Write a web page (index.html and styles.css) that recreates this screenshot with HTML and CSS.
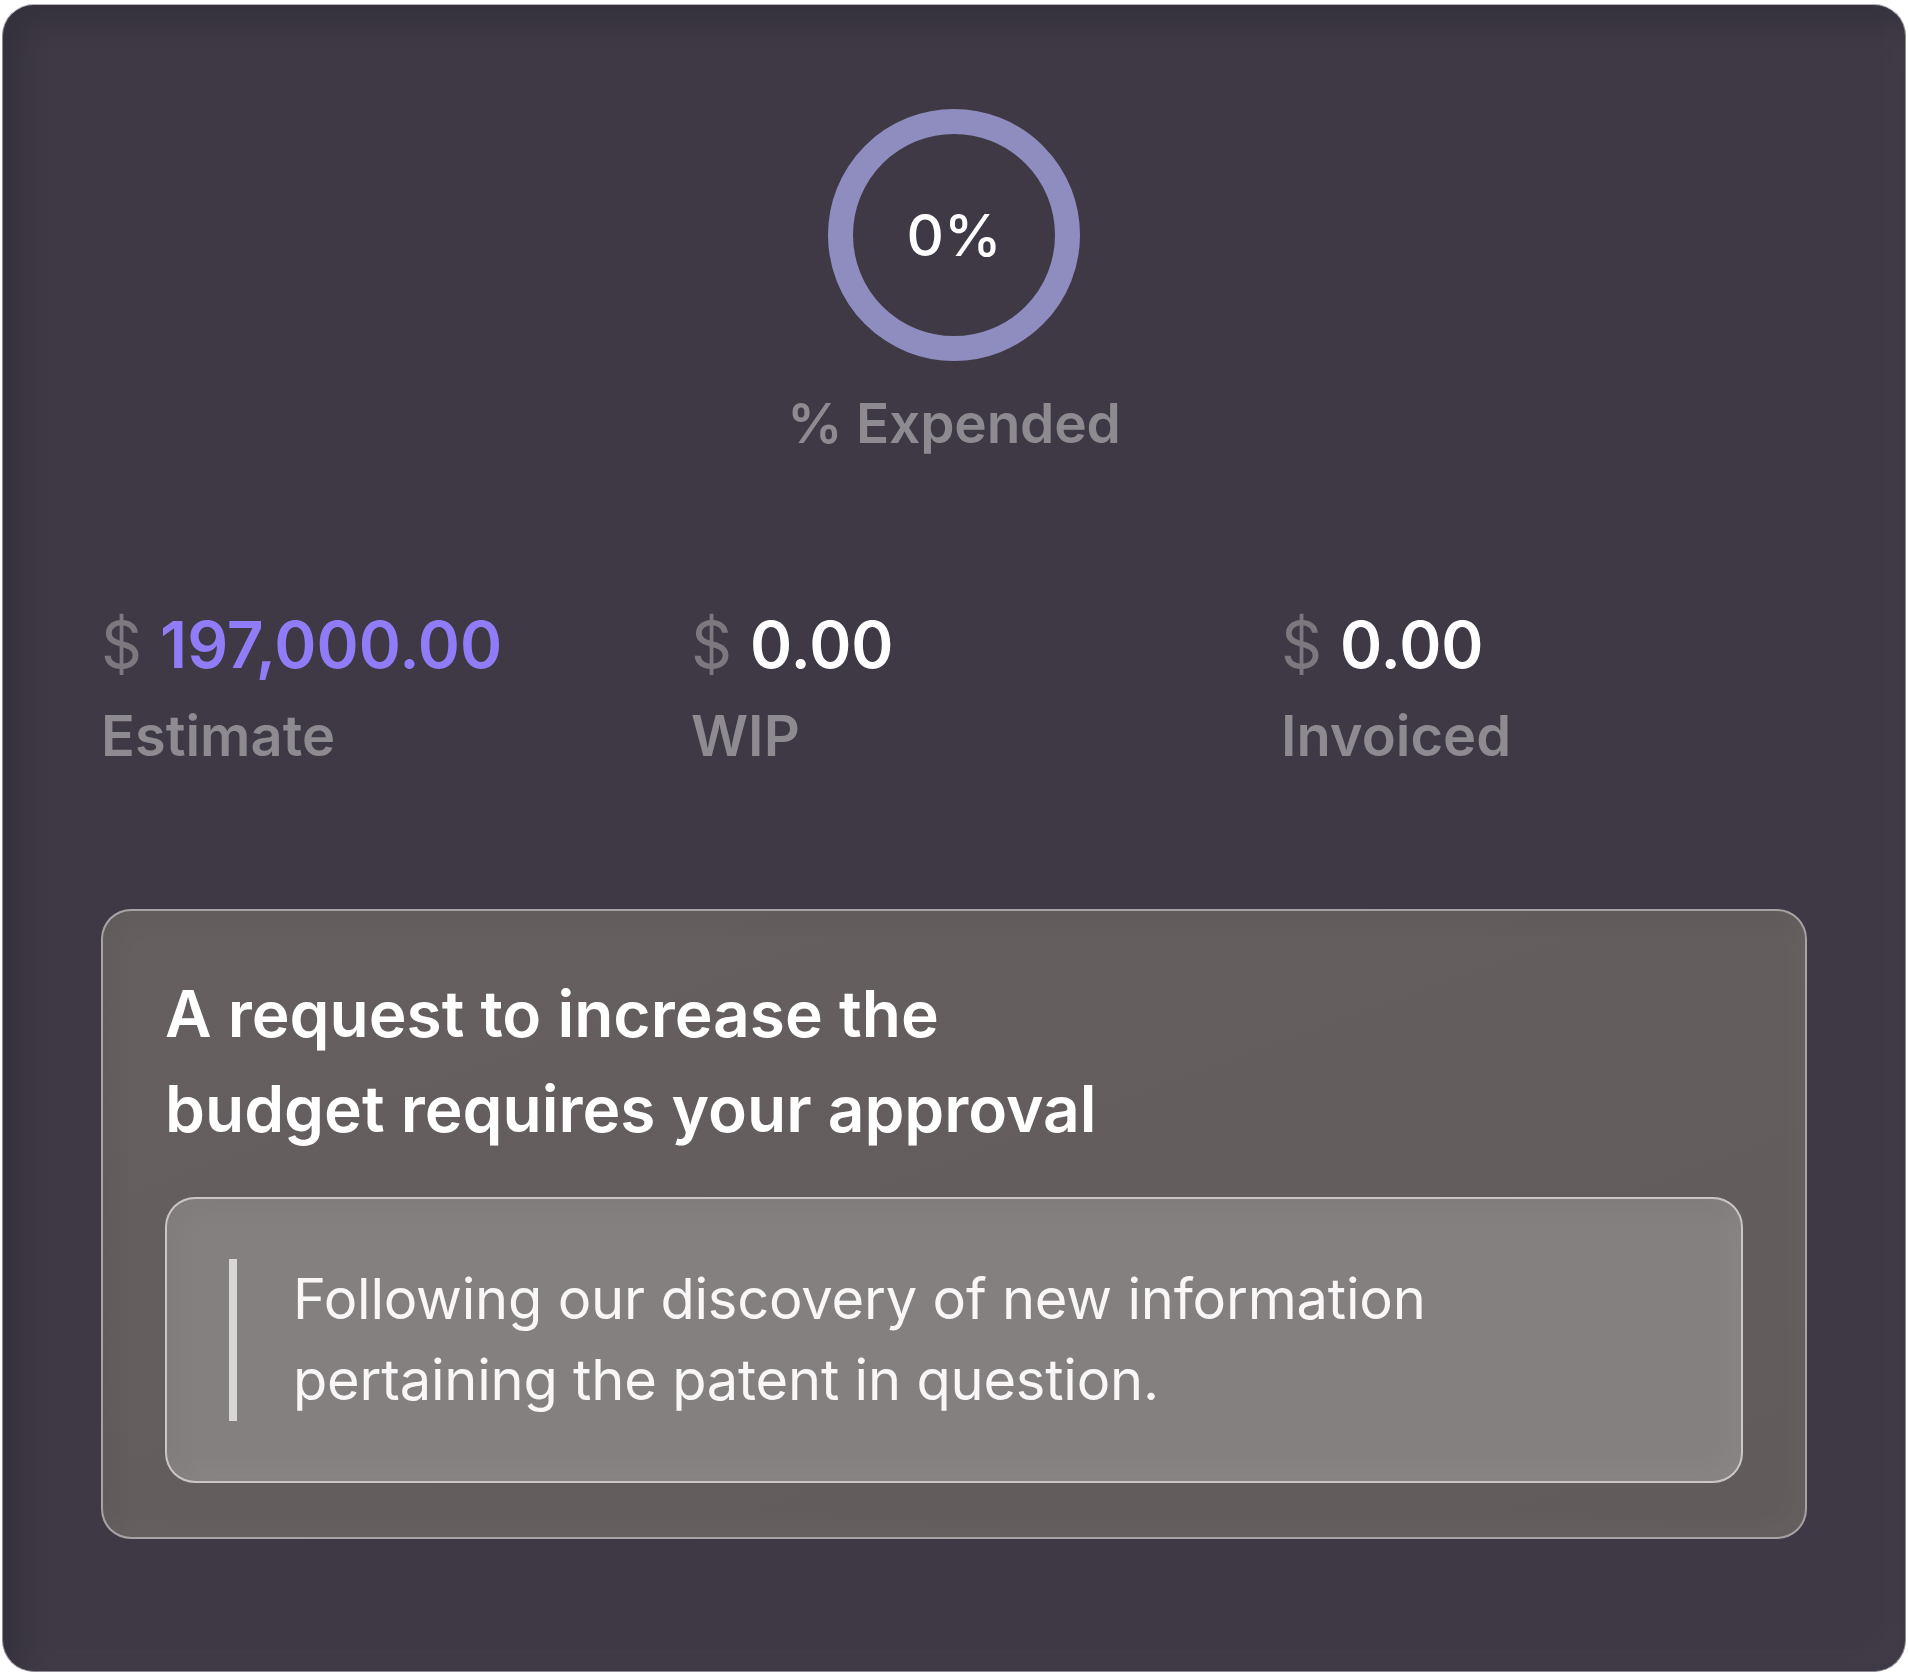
FILE: index.html
```html
<!DOCTYPE html>
<html lang="en">
<head>
<meta charset="utf-8">
<title>Budget</title>
<link rel="stylesheet" href="styles.css">
</head>
<body>
<div class="card">
  <div class="gauge"><span class="gauge-value">0%</span></div>
  <div class="gauge-label">% Expended</div>

  <div class="stats">
    <div class="stat">
      <div class="stat-value"><span class="currency">$</span> <span class="amount amount-accent">197,000.00</span></div>
      <div class="stat-label">Estimate</div>
    </div>
    <div class="stat">
      <div class="stat-value"><span class="currency">$</span> <span class="amount">0.00</span></div>
      <div class="stat-label">WIP</div>
    </div>
    <div class="stat">
      <div class="stat-value"><span class="currency">$</span> <span class="amount">0.00</span></div>
      <div class="stat-label">Invoiced</div>
    </div>
  </div>

  <div class="alert">
    <h2 class="alert-title">A request to increase the budget requires your approval</h2>
    <div class="note">
      <blockquote class="quote">Following our discovery of new information pertaining the patent in question.</blockquote>
    </div>
  </div>
</div>
</body>
</html>
```

FILE: styles.css
```css
html, body {
  margin: 0;
  padding: 0;
  background: #ffffff;
}

body {
  font-family: "Inter", "Noto Sans", sans-serif;
}

.card {
  margin: 4px 2px 1px 2px;
  height: 1668px;
  box-sizing: border-box;
  border: 1px solid #8f8c93;
  border-top-color: #b5b2b8;
  border-radius: 32px;
  background: #3e3945;
  padding: 104px 98px 0 98px;
  box-shadow:
    inset 14px 14px 30px rgba(20, 16, 26, 0.22),
    inset -14px -14px 30px rgba(255, 255, 255, 0.025);
  display: flex;
  flex-direction: column;
  align-items: stretch;
}

.gauge {
  align-self: center;
  width: 252px;
  height: 252px;
  box-sizing: border-box;
  border-radius: 50%;
  border: 25px solid #8f8cbf;
  display: flex;
  align-items: center;
  justify-content: center;
}

.gauge-value {
  color: #ffffff;
  font-size: 58px;
  font-weight: 500;
  line-height: 1;
}

.gauge-label {
  margin-top: 28px;
  text-align: center;
  color: #8d8a90;
  font-size: 55px;
  font-weight: 600;
  line-height: 68px;
  letter-spacing: -0.2px;
}

.stats {
  margin-top: 149px;
  display: grid;
  grid-template-columns: repeat(3, 1fr);
  column-gap: 64px;
}

.stat-value {
  font-size: 64px;
  line-height: 78px;
  white-space: nowrap;
}

.currency {
  color: #7c787e;
  font-weight: 400;
}

.amount {
  color: #ffffff;
  font-weight: 600;
}

.amount-accent {
  color: #8f7cf6;
}

.stat-label {
  margin-top: 18px;
  color: #8d8a90;
  font-size: 56px;
  font-weight: 600;
  line-height: 68px;
}

.alert {
  margin-top: 139px;
  border: 2px solid rgba(214, 209, 210, 0.6);
  border-radius: 30px;
  background: linear-gradient(160deg, #655f5f 0%, #615b5b 100%);
  padding: 55px 62px 54px 62px;
  box-shadow:
    inset 10px 10px 24px rgba(0, 0, 0, 0.04),
    inset -10px -10px 24px rgba(255, 255, 255, 0.03);
}

.alert-title {
  margin: 0;
  max-width: 980px;
  color: #ffffff;
  font-size: 64px;
  font-weight: 600;
  line-height: 95px;
}

.note {
  margin-top: 41px;
  border: 2px solid rgba(226, 222, 222, 0.75);
  border-radius: 30px;
  background: #858080;
  padding: 60px 62px;
  box-shadow:
    inset 10px 10px 24px rgba(0, 0, 0, 0.03),
    inset -10px -10px 24px rgba(255, 255, 255, 0.04);
}

.quote {
  margin: 0;
  border-left: 8px solid #d9d6d6;
  padding-left: 56px;
  color: #f8f6f6;
  font-size: 56px;
  font-weight: 400;
  line-height: 81px;
  letter-spacing: -0.2px;
}
```
